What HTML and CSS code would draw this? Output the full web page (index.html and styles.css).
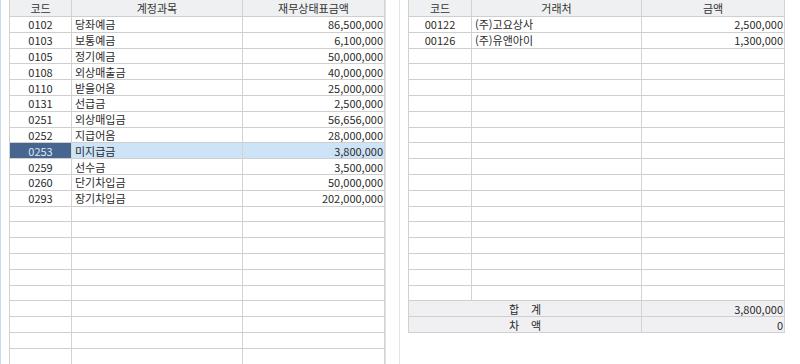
FILE: index.html
```html
<!DOCTYPE html>
<html lang="ko">
<head>
<meta charset="utf-8">
<link rel="stylesheet" href="styles.css">
</head>
<body>
<div class="screen">
  <div class="pane pane-left">
    <div class="grid grid-left">
      <div class="c h">코드</div><div class="c h">계정과목</div><div class="c h">재무상태표금액</div>
      <div class="c code">0102</div><div class="c name">당좌예금</div><div class="c num">86,500,000</div>
      <div class="c code">0103</div><div class="c name">보통예금</div><div class="c num">6,100,000</div>
      <div class="c code">0105</div><div class="c name">정기예금</div><div class="c num">50,000,000</div>
      <div class="c code">0108</div><div class="c name">외상매출금</div><div class="c num">40,000,000</div>
      <div class="c code">0110</div><div class="c name">받을어음</div><div class="c num">25,000,000</div>
      <div class="c code">0131</div><div class="c name">선급금</div><div class="c num">2,500,000</div>
      <div class="c code">0251</div><div class="c name">외상매입금</div><div class="c num">56,656,000</div>
      <div class="c code">0252</div><div class="c name">지급어음</div><div class="c num">28,000,000</div>
      <div class="c code sel-code">0253</div><div class="c name sel">미지급금</div><div class="c num sel">3,800,000</div>
      <div class="c code">0259</div><div class="c name">선수금</div><div class="c num">3,500,000</div>
      <div class="c code">0260</div><div class="c name">단기차입금</div><div class="c num">50,000,000</div>
      <div class="c code">0293</div><div class="c name">장기차입금</div><div class="c num">202,000,000</div>
      <div class="c"></div><div class="c"></div><div class="c"></div>
      <div class="c"></div><div class="c"></div><div class="c"></div>
      <div class="c"></div><div class="c"></div><div class="c"></div>
      <div class="c"></div><div class="c"></div><div class="c"></div>
      <div class="c"></div><div class="c"></div><div class="c"></div>
      <div class="c"></div><div class="c"></div><div class="c"></div>
      <div class="c"></div><div class="c"></div><div class="c"></div>
      <div class="c"></div><div class="c"></div><div class="c"></div>
      <div class="c"></div><div class="c"></div><div class="c"></div>
      <div class="c"></div><div class="c"></div><div class="c"></div>
      <div class="c"></div><div class="c"></div><div class="c"></div>
    </div>
  </div>
  <div class="pane pane-right">
    <div class="grid grid-right">
      <div class="c h">코드</div><div class="c h">거래처</div><div class="c h">금액</div>
      <div class="c code">00122</div><div class="c name">(주)고요상사</div><div class="c num">2,500,000</div>
      <div class="c code">00126</div><div class="c name">(주)유앤아이</div><div class="c num">1,300,000</div>
      <div class="c"></div><div class="c"></div><div class="c"></div>
      <div class="c"></div><div class="c"></div><div class="c"></div>
      <div class="c"></div><div class="c"></div><div class="c"></div>
      <div class="c"></div><div class="c"></div><div class="c"></div>
      <div class="c"></div><div class="c"></div><div class="c"></div>
      <div class="c"></div><div class="c"></div><div class="c"></div>
      <div class="c"></div><div class="c"></div><div class="c"></div>
      <div class="c"></div><div class="c"></div><div class="c"></div>
      <div class="c"></div><div class="c"></div><div class="c"></div>
      <div class="c"></div><div class="c"></div><div class="c"></div>
      <div class="c"></div><div class="c"></div><div class="c"></div>
      <div class="c"></div><div class="c"></div><div class="c"></div>
      <div class="c"></div><div class="c"></div><div class="c"></div>
      <div class="c"></div><div class="c"></div><div class="c"></div>
      <div class="c"></div><div class="c"></div><div class="c"></div>
      <div class="c"></div><div class="c"></div><div class="c"></div>
      <div class="c sum-label"><span>합</span><span>계</span></div><div class="c num sum">3,800,000</div>
      <div class="c sum-label"><span>차</span><span>액</span></div><div class="c num sum">0</div>
    </div>
  </div>
</div>
</body>
</html>
```
FILE: styles.css
```css
html, body {
  margin: 0;
  padding: 0;
  background: #ffffff;
}
body {
  width: 800px;
  height: 364px;
  overflow: hidden;
  font-family: "Noto Sans CJK KR", "Noto Sans", sans-serif;
  font-size: 11px;
  color: #2a2a2a;
}
.screen {
  display: flex;
  height: 364px;
}
.pane {
  height: 364px;
  box-sizing: border-box;
}
.pane-left {
  width: 400px;
  border-left: 1px solid #c6daf0;
  border-right: 1px solid #e3e3e3;
  padding-left: 8px;
}
.pane-right {
  flex: 1;
  padding-left: 8px;
}
.grid {
  display: grid;
  grid-template-rows: 17px;
  grid-auto-rows: 15.8px;
  border-left: 1px solid #d0d0d0;
}
.grid-left {
  width: 377px;
  box-sizing: border-box;
  grid-template-columns: 62px 171px 142px;
  border-right: 1px solid #e2e2e2;
}
.grid-right {
  width: 377px;
  box-sizing: border-box;
  grid-template-columns: 63px 170px 143px;
}
.c {
  box-sizing: border-box;
  border-right: 1px solid #d3d3d3;
  border-bottom: 1px solid #cfcfcf;
  line-height: 14px;
  white-space: nowrap;
  overflow: hidden;
  display: flex;
  align-items: center;
}
.h {
  background: #eff0f2;
  justify-content: center;
  color: #333333;
}
.code {
  justify-content: center;
}
.name {
  padding-left: 3px;
}
.num {
  justify-content: flex-end;
  padding-right: 1px;
}
.sel {
  background: #cde3f8;
}
.sel-code {
  background: #46658f;
  color: #dde8f4;
}
.sum-label {
  grid-column: span 2;
  background: #f0f0f2;
  justify-content: center;
  gap: 12px;
}
.sum {
  background: #f0f0f2;
}
```
